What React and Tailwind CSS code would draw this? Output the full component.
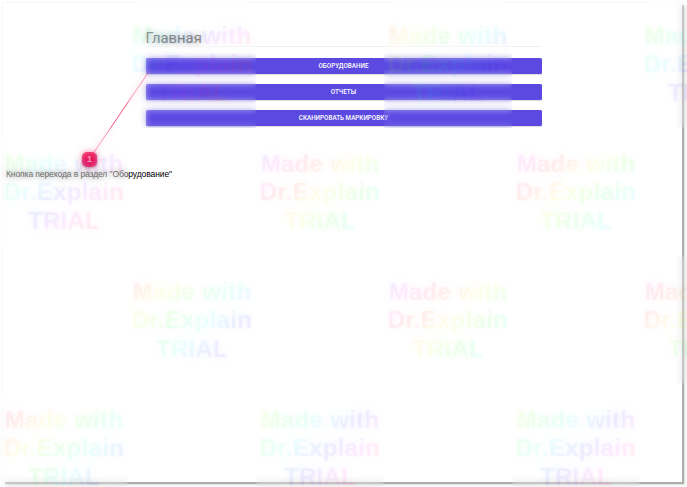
const ROWS = [
  [null, 145, null, 40, null, 120],
  [118, null, 288, null, 312, null],
  [null, 25, null, 288, null, 335],
  [0, null, 100, null, 100, null],
];

const BUTTONS = ['ОБОРУДОВАНИЕ', 'ОТЧЕТЫ', 'СКАНИРОВАТЬ МАРКИРОВКУ'];

// Diagonal rainbow whose phase differs from one stamp to the next
function rainbow(hue) {
  const stops = Array.from({ length: 29 }, (_, i) => {
    const h = (hue - 77 + (410 * i) / 28 + 720) % 360;
    return `hsl(${h.toFixed(0)} 100% 50% / 0.1)`;
  });
  return `linear-gradient(135deg, ${stops.join(', ')})`;
}

function Stamp({ hue }) {
  if (hue === null) return <div />;
  return (
    <div className="grid grid-cols-[128px] grid-rows-[128px]">
      <div className="col-start-1 row-start-1 backdrop-blur-[3px] opacity-50" />
      <div
        className="col-start-1 row-start-1 bg-clip-text pt-[22px] text-center font-['Liberation_Sans',sans-serif] text-[24px] leading-[28.4px] font-bold tracking-[0.3px] whitespace-nowrap text-transparent"
        style={{ backgroundImage: rainbow(hue) }}
      >
        <div>Made with</div>
        <div>Dr.Explain</div>
        <div>TRIAL</div>
      </div>
    </div>
  );
}

export default function App() {
  return (
    <div className="relative h-[487px] w-[687px] overflow-hidden bg-white pt-[3px] pl-[3px] font-[Roboto,sans-serif]">
      <main className="h-[479px] w-[679px] bg-white pt-[25px] pl-[142.5px] shadow-[0_0_2px_rgba(0,0,0,0.1),2px_2px_0_#b0b0b0,3px_3px_2px_rgba(0,0,0,0.15)]">
        <h1 className="h-[19px] w-[396px] border-b border-[#f0f0f0] text-[14.8px] leading-[20px] text-[#444]">
          Главная
        </h1>
        <div className="mt-[11px] flex w-[396px] flex-col gap-[10.5px]">
          {BUTTONS.map((label) => (
            <button
              key={label}
              className="h-[15.5px] rounded-[1.5px] bg-[#5b49e2] pt-px text-[6.3px] leading-[14.5px] font-medium text-white shadow-[0_0.5px_1px_rgba(0,0,0,0.15)]"
            >
              {label}
            </button>
          ))}
        </div>
      </main>

      <svg className="absolute top-0 left-0" width="687" height="200" fill="none">
        <path d="M90 158L148 73" stroke="#ee3767" strokeWidth="0.9" />
      </svg>
      <div className="absolute top-[152px] left-[82px] h-[15px] w-[15px] rounded-[5px] bg-[#ec0048] text-center font-['Liberation_Sans',sans-serif] text-[9px] leading-[15px] font-bold text-white shadow-[0_1px_2px_rgba(0,0,0,0.35)]">
        1
      </div>
      <p className="absolute top-[168px] left-[6px] font-['Liberation_Sans',sans-serif] text-[8.5px] leading-[12px] tracking-[-0.1px] whitespace-nowrap text-black">
        Кнопка перехода в раздел "Оборудование"
      </p>

      <div className="absolute top-0 left-0 grid grid-cols-[repeat(6,128px)] grid-rows-[repeat(4,128px)]">
        {ROWS.flatMap((row, y) => row.map((hue, x) => <Stamp key={`${y}-${x}`} hue={hue} />))}
      </div>
    </div>
  );
}
